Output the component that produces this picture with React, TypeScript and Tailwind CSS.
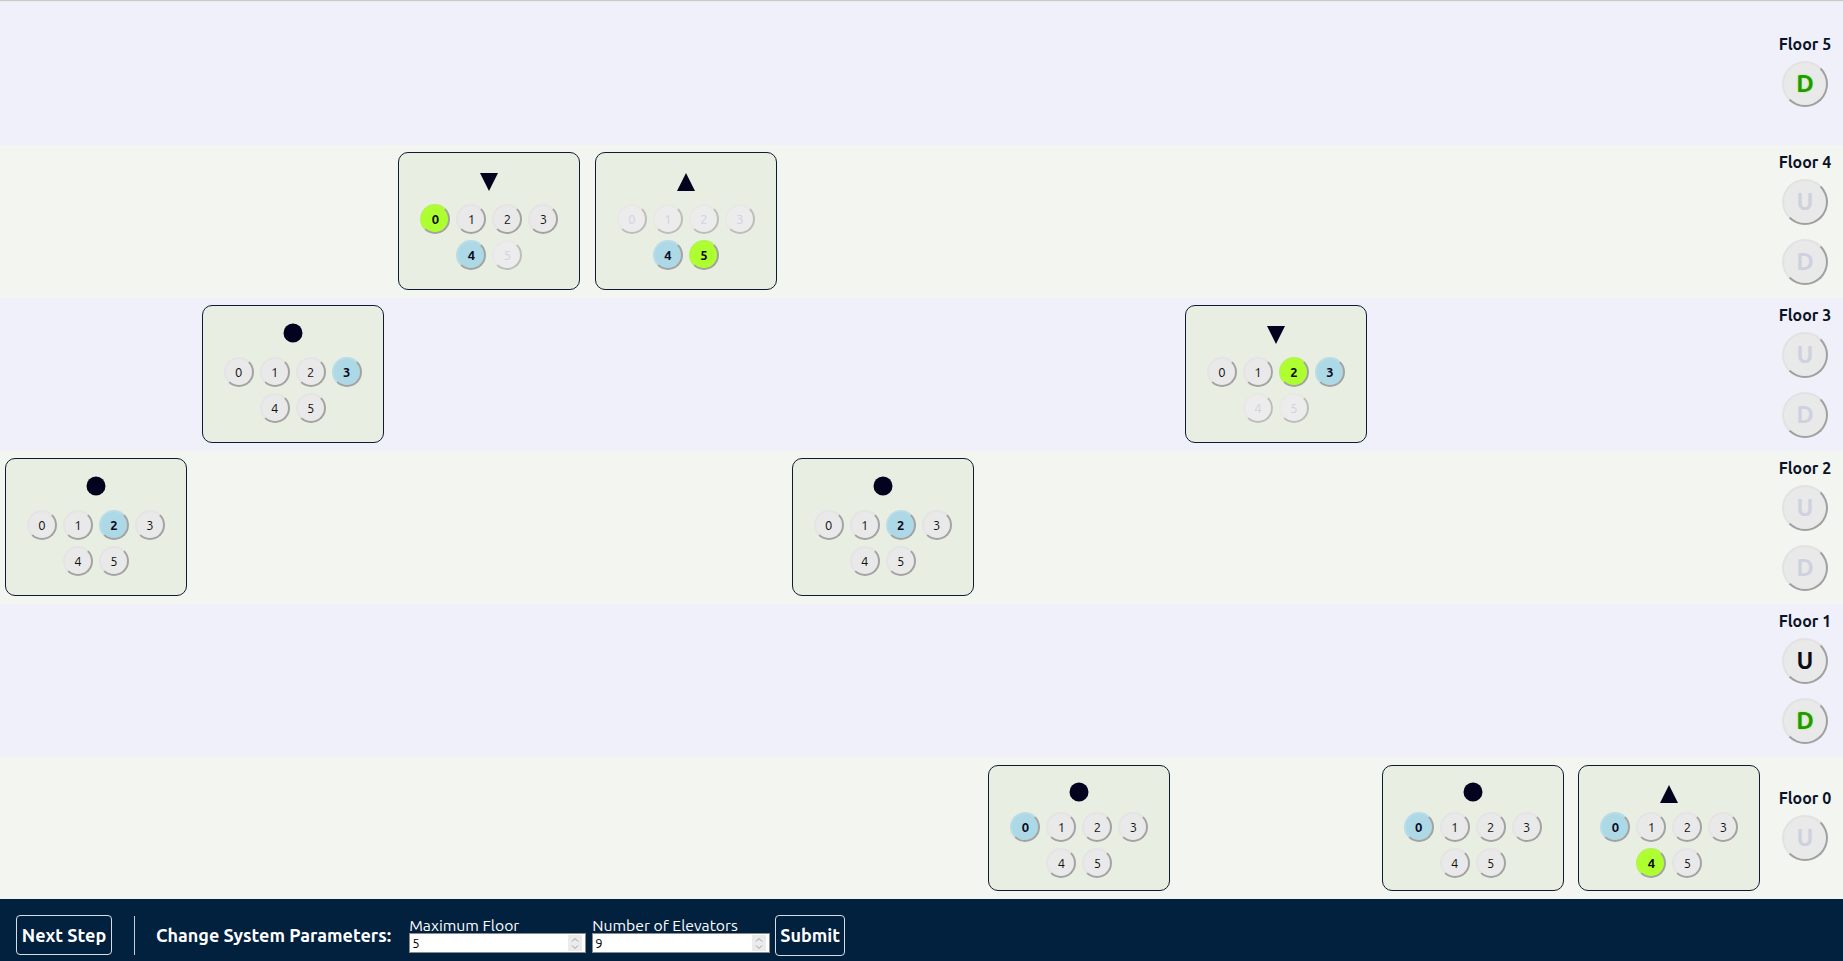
import React from "react";

type BtnState = "n" | "blue" | "green" | "dis";
type Dir = "idle" | "up" | "down";
interface Elev {
  floor: number;
  dir: Dir;
  btns: BtnState[];
}

const elevators: Elev[] = [
  { floor: 2, dir: "idle", btns: ["n", "n", "blue", "n", "n", "n"] },
  { floor: 3, dir: "idle", btns: ["n", "n", "n", "blue", "n", "n"] },
  { floor: 4, dir: "down", btns: ["green", "n", "n", "n", "blue", "dis"] },
  { floor: 4, dir: "up", btns: ["dis", "dis", "dis", "dis", "blue", "green"] },
  { floor: 2, dir: "idle", btns: ["n", "n", "blue", "n", "n", "n"] },
  { floor: 0, dir: "idle", btns: ["blue", "n", "n", "n", "n", "n"] },
  { floor: 3, dir: "down", btns: ["n", "n", "green", "blue", "dis", "dis"] },
  { floor: 0, dir: "idle", btns: ["blue", "n", "n", "n", "n", "n"] },
  { floor: 0, dir: "up", btns: ["blue", "n", "n", "n", "green", "n"] },
];

type Call = { l: "U" | "D"; s: "dis" | "black" | "green" };
const calls: Record<number, Call[]> = {
  5: [{ l: "D", s: "green" }],
  4: [
    { l: "U", s: "dis" },
    { l: "D", s: "dis" },
  ],
  3: [
    { l: "U", s: "dis" },
    { l: "D", s: "dis" },
  ],
  2: [
    { l: "U", s: "dis" },
    { l: "D", s: "dis" },
  ],
  1: [
    { l: "U", s: "black" },
    { l: "D", s: "green" },
  ],
  0: [{ l: "U", s: "dis" }],
};

const rowH: Record<number, string> = {
  5: "h-[143px] bg-[#eff0f9]",
  4: "h-[153px] bg-[#f3f5f1]",
  3: "h-[153px] bg-[#eff0f9]",
  2: "h-[153px] bg-[#f3f5f1]",
  1: "h-[153px] bg-[#eff0f9]",
  0: "h-[142px] bg-[#f3f5f1]",
};

const FONT = { fontFamily: '"Ubuntu", "Noto Sans", "Open Sans", sans-serif' };

function Arrow({ dir }: { dir: Dir }) {
  if (dir === "idle")
    return (
      <svg width="20" height="20" viewBox="0 0 20 20" className="mb-[4px]">
        <circle cx="10" cy="10" r="9.5" fill="#03031f" />
      </svg>
    );
  if (dir === "down")
    return (
      <svg width="18" height="18" viewBox="0 0 18 18">
        <polygon points="0,0 18,0 9,18" fill="#03031f" />
      </svg>
    );
  return (
    <svg width="18" height="18" viewBox="0 0 18 18">
      <polygon points="9,0 18,18 0,18" fill="#03031f" />
    </svg>
  );
}

function FloorBtn({ n, s }: { n: number; s: BtnState }) {
  const base =
    "w-[30px] h-[30px] rounded-full border-2 flex items-center justify-center text-[13px] leading-none";
  let cls = "";
  if (s === "n")
    cls =
      "bg-[#e9e9e9] text-[#111111] border-t-[#e4e4e4] border-l-[#e4e4e4] border-r-[#a3a3a3] border-b-[#a3a3a3]";
  else if (s === "blue")
    cls =
      "bg-[#add8e6] text-[#0a0a1e] font-bold border-t-[#b8dce8] border-l-[#b8dce8] border-r-[#a3a3a3] border-b-[#a3a3a3]";
  else if (s === "green")
    cls =
      "bg-[#adff2f] text-[#0a0a0a] font-bold border-t-[#b5f54a] border-l-[#b5f54a] border-r-[#a3a3a3] border-b-[#a3a3a3]";
  else
    cls =
      "bg-[#ebeceb] text-[#d2d2e2] border-t-[#e8e9e6] border-l-[#e8e9e6] border-r-[#bdbebb] border-b-[#bdbebb]";
  return (
    <div className="w-[36px] h-[36px] flex items-center justify-center">
      <div className={`${base} ${cls}`}>{n}</div>
    </div>
  );
}

function Card({ e, short }: { e: Elev; short: boolean }) {
  return (
    <div
      className={`ml-[5px] w-[182px] rounded-[10px] border border-[#0e1b33] bg-[#e8eee1] flex flex-col items-center ${
        short ? "mt-[8px] h-[126px]" : "mt-[7px] h-[138px]"
      }`}
    >
      <div
        className={`flex items-center justify-center ${
          short ? "mt-[10px] h-[36px]" : "mt-[11px] h-[36px]"
        }`}
      >
        <Arrow dir={e.dir} />
      </div>
      <div
        className={`w-[144px] flex flex-wrap justify-center ${
          short ? "mt-[-3px]" : "mt-[1px]"
        }`}
      >
        {e.btns.map((s, i) => (
          <FloorBtn key={i} n={i} s={s} />
        ))}
      </div>
    </div>
  );
}

function CallBtn({ c }: { c: Call }) {
  let txt = "";
  if (c.s === "dis") txt = "text-[#cdd2de]";
  else if (c.s === "black") txt = "text-[#0b0b14]";
  else txt = "text-[#1f9a06] [text-shadow:0_0_2px_#8ef040]";
  return (
    <div
      className={`my-[7px] w-[46px] h-[46px] rounded-full border-2 bg-[#e9e9e9] border-t-[#e2e2e2] border-l-[#e2e2e2] border-r-[#a0a0a0] border-b-[#a0a0a0] flex items-center justify-center text-[24px] font-bold leading-none ${txt}`}
    >
      {c.l}
    </div>
  );
}

function Spinner() {
  return (
    <div className="absolute right-[3px] top-[1px] w-[14px] h-[16px] bg-[#ebebeb] flex items-center justify-center">
      <svg width="10" height="15" viewBox="0 0 10 15">
        <polyline points="2,5.5 5,2.5 8,5.5" fill="none" stroke="#a0a0a0" strokeWidth="1" />
        <polyline points="2,9.5 5,12.5 8,9.5" fill="none" stroke="#a0a0a0" strokeWidth="1" />
      </svg>
    </div>
  );
}

export default function App() {
  const floors = [5, 4, 3, 2, 1, 0];
  return (
    <div className="w-[1843px] h-[961px] overflow-hidden flex flex-col bg-[#f3f5f1]" style={FONT}>
      <div className="shrink-0 h-[1px] bg-[#c8c8c6]" />
      <div className="shrink-0 h-[1px] bg-[#eceef4]" />
      {floors.map((f) => (
        <div key={f} className={`shrink-0 grid grid-cols-[repeat(9,1fr)_73px] ${rowH[f]}`}>
          {elevators.map((e, i) => (
            <div key={i}>{e.floor === f && <Card e={e} short={f === 0} />}</div>
          ))}
          <div className="flex flex-col items-center justify-center pr-[3px]">
            <div className="h-[20px] leading-[20px] text-[16px] font-bold text-[#0a1226] whitespace-nowrap">
              Floor {f}
            </div>
            {calls[f].map((c, i) => (
              <CallBtn key={i} c={c} />
            ))}
          </div>
        </div>
      ))}
      <div className="shrink-0 h-[62px] bg-[#02213f] flex items-center pt-[10px] text-white">
        <div className="ml-[16px] w-[96px] h-[40px] border border-[#d8dde4] rounded-[4px] flex items-center justify-center text-[18px] font-bold">
          Next Step
        </div>
        <div className="ml-[22px] w-[1px] h-[39px] bg-[#c8ced8]" />
        <div className="ml-[21px] text-[18px] font-bold whitespace-nowrap">Change System Parameters:</div>
        <div className="ml-[18px] flex flex-col">
          <div className="text-[15.75px] leading-[16px] h-[16px] whitespace-nowrap">Maximum Floor</div>
          <div className="relative w-[177px] h-[20px] bg-white border border-[#8a8a8a] text-black text-[13px] leading-[18px] pl-[2px]">
            5
            <Spinner />
          </div>
        </div>
        <div className="ml-[6px] flex flex-col">
          <div className="text-[15.75px] leading-[16px] h-[16px] whitespace-nowrap">Number of Elevators</div>
          <div className="relative w-[178px] h-[20px] bg-white border border-[#8a8a8a] text-black text-[13px] leading-[18px] pl-[2px]">
            9
            <Spinner />
          </div>
        </div>
        <div className="ml-[5px] w-[70px] h-[41px] border border-[#d8dde4] rounded-[4px] flex items-center justify-center text-[18px] font-bold">
          Submit
        </div>
      </div>
    </div>
  );
}
